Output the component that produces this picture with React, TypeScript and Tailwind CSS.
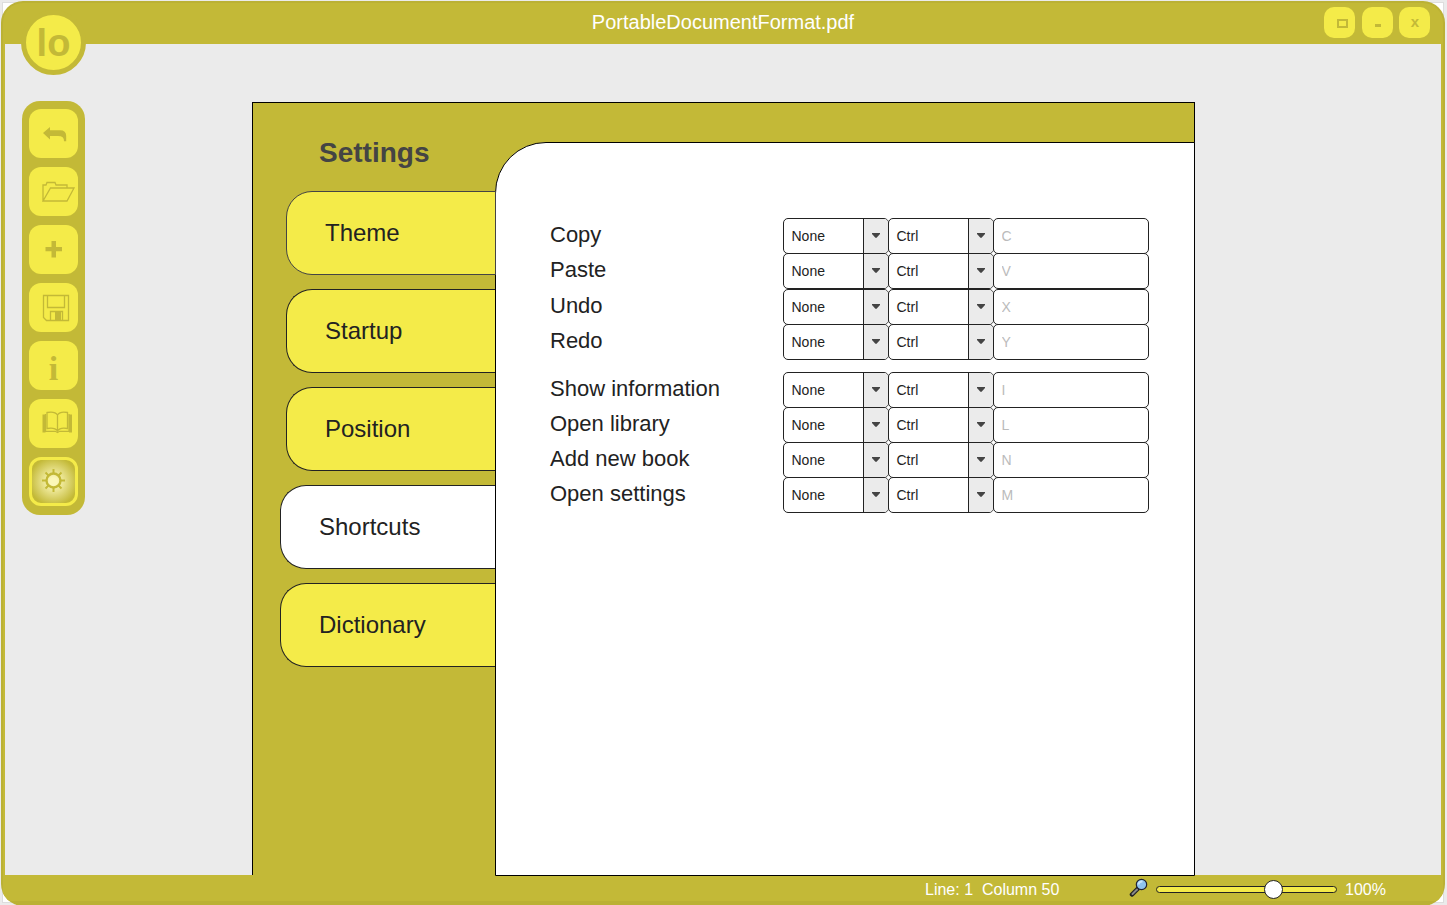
import type { ReactNode } from "react";

type Shortcut = { label: string; hint: string; gap?: string };

const shortcuts: Shortcut[] = [
  { label: "Copy", hint: "C" },
  { label: "Paste", hint: "V", gap: "-mt-px" },
  { label: "Undo", hint: "X" },
  { label: "Redo", hint: "Y", gap: "-mt-px" },
  { label: "Show information", hint: "I", gap: "mt-3" },
  { label: "Open library", hint: "L", gap: "-mt-px" },
  { label: "Add new book", hint: "N", gap: "-mt-px" },
  { label: "Open settings", hint: "M", gap: "-mt-px" },
];

const tabs = [
  { label: "Theme", style: "ml-[33px] w-[210px] bg-[#f4eb49] border-r border-[#444]" },
  { label: "Startup", style: "ml-[33px] w-[209px] bg-[#f4eb49] border-[#222]" },
  { label: "Position", style: "ml-[33px] w-[209px] bg-[#f4eb49] border-[#222]" },
  { label: "Shortcuts", style: "ml-[27px] w-[215px] bg-white border-[#222]" },
  { label: "Dictionary", style: "ml-[27px] w-[215px] bg-[#f4eb49] border-[#222]" },
];

function Icon({ children }: { children: ReactNode }) {
  return (
    <svg width="49" height="49" viewBox="0 0 49 49" fill="none" stroke="#c3b937" strokeWidth="1.3">
      {children}
    </svg>
  );
}

const tools = [
  {
    name: "Back",
    icon: (
      <path
        fill="#c3b937"
        stroke="none"
        d="M14 24 21 18V21.300H31Q37.200 21.300 37.200 27V32.300H35Q35.300 27 29 27H21V30.500Z"
      />
    ),
  },
  {
    name: "Open",
    icon: <path d="M14 34V18H17L18 15.500H26L27 18H38V21M14 34 21.500 21H45L38 34Z" />,
  },
  {
    name: "Add",
    icon: <path fill="#c3b937" stroke="none" d="M22.500 16H27V22H33V26.300H27V32.500H22.500V26.300H16.500V22H22.500Z" />,
  },
  {
    name: "Save",
    icon: (
      <>
        <path d="M14.500 12.500H39.500V37.500H17.500L14.500 34.500ZM18.500 12.500V24.500H35.500V12.500" />
        <path d="M21.500 37V28.500H33.500V37" />
        <path fill="#c3b937" stroke="none" d="M26 28.500H32V37H26Z" />
      </>
    ),
  },
  {
    name: "Information",
    icon: (
      <text
        x="24.500"
        y="38.500"
        fontSize="34"
        fontWeight="bold"
        fill="#c3b937"
        stroke="none"
        textAnchor="middle"
        fontFamily="Liberation Serif, serif"
      >
        i
      </text>
    ),
  },
  {
    name: "Library",
    icon: (
      <>
        <path d="M18 13.500Q26 12 28.500 16Q31 12 38.500 13.500V29.500Q31 28 28.500 32Q26 28 18 29.500ZM28.500 16V32" />
        <path d="M16.500 15V32.300H26.500L28.500 33.500 30.500 32.300H40V15" />
        <path fill="#c3b937" stroke="none" d="M13.500 15.500H16.500V33.500H13.500ZM40 15.500H43V33.500H40Z" />
      </>
    ),
  },
];

function Select({ value }: { value: string }) {
  return (
    <div className="-mr-px flex h-9 w-[106px] shrink-0 overflow-hidden rounded-[5px] border border-[#222] bg-white text-[14px] text-[#222]">
      <span className="flex-1 pl-[7.5px] leading-[34px]">{value}</span>
      <span className="flex w-[25px] items-center justify-center border-l border-[#222] bg-[#ebebeb] pb-px">
        <svg width="8" height="5" viewBox="0 0 8 5">
          <path fill="#444" d="M0 0H8V1L4.600 4.700H3.400L0 1Z" />
        </svg>
      </span>
    </div>
  );
}

export default function App() {
  return (
    <div className="relative h-[905px] w-[1447px] overflow-hidden bg-[#ebebeb] pl-0.5 pt-0.5 font-['Liberation_Sans',Arial,sans-serif]">
      <div className="h-[901px] w-[1442px] border border-[#ddd] bg-white">
        <div className="-ml-0.5 -mt-0.5 flex h-[905px] w-[1444px] flex-col overflow-hidden rounded-[22px] bg-[#bbb135] px-0.5 pt-0.5">
          <header className="relative flex h-[41px] shrink-0 items-start justify-center rounded-t-[20px] bg-[#c3b937]">
            <h1 className="pt-[7px] text-[20px] leading-6 text-white">PortableDocumentFormat.pdf</h1>
            <div className="absolute right-[13px] top-1 flex font-bold text-[#c3b937]">
              <button aria-label="Maximize" className="flex size-[31px] items-center justify-center rounded-[10px] bg-[#f4eb49] pl-[5px] pt-0.5">
                <span className="h-[9px] w-[11px] border-2 border-[#c3b937]" />
              </button>
              <button aria-label="Minimize" className="ml-[7px] flex size-[31px] items-center justify-center rounded-[10px] bg-[#f4eb49] pl-px pt-1.5">
                <span className="h-[3px] w-1.5 bg-[#c3b937]" />
              </button>
              <button className="ml-1.5 flex size-[31px] items-center justify-center rounded-[10px] bg-[#f4eb49] pl-px text-[15px]">x</button>
            </div>
          </header>
          <main className="flex h-[831px] shrink-0 border-x-2 border-[#c3b937] bg-[#ebebeb]">
            <nav className="ml-[17px] mt-[57px] flex h-[414px] w-[63px] shrink-0 flex-col gap-[9px] rounded-[18px] bg-[#c3b937] px-[7px] pt-2">
              {tools.map((tool) => (
                <button key={tool.name} aria-label={tool.name} className="size-[49px] rounded-xl bg-[#f4eb49]">
                  <Icon>{tool.icon}</Icon>
                </button>
              ))}
              <button
                aria-label="Settings"
                className="size-[49px] rounded-xl border-[3px] border-[#f4eb49] bg-[radial-gradient(circle,#fbf7b8_12%,#c3b937_80%)]"
              >
                <svg width="43" height="43" viewBox="-21.500 -21.500 43 43" fill="none" stroke="#c3b937" strokeWidth="2">
                  <g transform="translate(0 -1)">
                    <circle r="7" strokeWidth="2.400" />
                    <path d="M0-11.500V-7M0 7V11.500M-11.500 0H-7M7 0H11.500M-8-8-5-5M8-8 5-5M-8 8-5 5M8 8 5 5" />
                  </g>
                </svg>
              </button>
            </nav>
            <section className="relative ml-[167px] mt-[58px] flex h-[773px] w-[943px] shrink-0 border-x border-t border-black bg-[#c3b937]">
              <aside className="w-[242px] shrink-0">
                <h2 className="ml-[66px] mt-[34px] text-[28px] font-bold leading-8 text-[#444]">Settings</h2>
                <div className="mt-[22px] flex flex-col gap-3.5">
                  {tabs.map((tab) => (
                    <button
                      key={tab.label}
                      className={"relative z-10 h-[84px] shrink-0 rounded-l-[26px] border-y border-l pl-[38px] text-left text-[24px] text-[#222] " + tab.style}
                    >
                      {tab.label}
                    </button>
                  ))}
                </div>
              </aside>
              <div className="-mr-px mt-[39px] h-[734px] w-[700px] shrink-0 rounded-tl-[51px] border border-black bg-white pl-[54px] pt-[75px]">
                {shortcuts.map((item) => (
                  <div key={item.label} className={"flex h-9 " + (item.gap ?? "")}>
                    <span className="w-[233px] shrink-0 pt-px text-[22px] leading-8 text-[#222]">{item.label}</span>
                    <Select value="None" />
                    <Select value="Ctrl" />
                    <input
                      aria-label={item.label}
                      placeholder={item.hint}
                      className="h-9 w-[156px] rounded-[5px] border border-[#222] bg-white px-[7.5px] text-[14px] placeholder:text-[#bbb]"
                    />
                  </div>
                ))}
              </div>
            </section>
          </main>
          <footer className="flex h-[26px] shrink-0 items-start bg-[#c3b937] pl-[922px] pt-1.5 text-[16px] leading-[18px] text-white">
            <span className="w-[204px] shrink-0 whitespace-pre">Line: 1  Column 50</span>
            <svg className="-mt-[3px] shrink-0" width="20" height="20" viewBox="0 0 20 20">
              <path d="M3 16.500 9.500 10" stroke="#222" strokeWidth="4.500" strokeLinecap="round" />
              <path d="M3.500 16 8 11.500" stroke="#888" strokeWidth="2" strokeLinecap="round" />
              <circle cx="12.500" cy="6.500" r="5.200" fill="#8fc3ed" stroke="#223" strokeWidth="1.200" />
              <path d="M9.500 6.500A3.500 3.500 0 0 1 13.500 3.500" stroke="#c9e4fb" strokeWidth="2" fill="none" />
            </svg>
            <span className="relative ml-[7px] mt-[5px] h-[7px] w-[181px] shrink-0 rounded-full border border-[#222] bg-[#f4eb49]">
              <span className="absolute -top-[7px] left-[107px] size-[19px] rounded-full border border-[#222] bg-white" />
            </span>
            <span className="ml-2">100%</span>
          </footer>
        </div>
      </div>
      <div className="absolute left-[21px] top-[10px] flex size-[65px] items-center justify-center rounded-full border-[5px] border-[#c3b937] bg-[#f4eb49] text-[38px] font-bold leading-none text-[#c3b937]">
        lo
      </div>
    </div>
  );
}
